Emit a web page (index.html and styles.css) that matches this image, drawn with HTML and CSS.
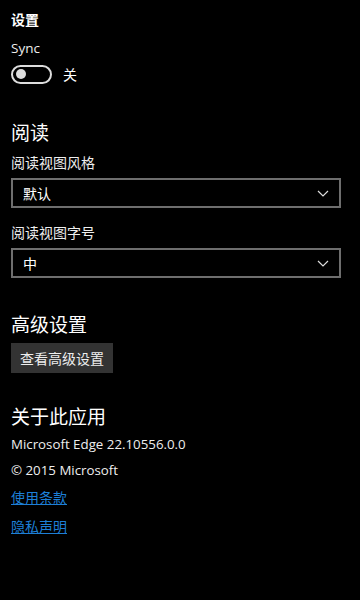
FILE: index.html
```
<!DOCTYPE html>
<html lang="zh-CN">
<head>
    <meta charset="UTF-8">
    <meta name="viewport" content="width=device-width, initial-scale=1.0">
    <title>设置</title>
    <link rel="stylesheet" href="styles.css">
</head>
<body>

    <div class="settings">
        <!-- 设置 / Sync -->
        <section class="group">
            <h3 class="group-title">设置</h3>
            <p class="label">Sync</p>
            <div class="toggle-row">
                <span class="toggle"><span class="knob"></span></span>
                <span class="toggle-text">关</span>
            </div>
        </section>

        <!-- 阅读 -->
        <section class="group reading">
            <h2 class="heading">阅读</h2>
            <p class="label">阅读视图风格</p>
            <div class="select">
                <span>默认</span>
                <svg class="chevron" width="12" height="7" viewBox="0 0 12 7">
                    <polyline points="1,1 6,6 11,1" fill="none" stroke="#ddd" stroke-width="1.2"/>
                </svg>
            </div>
            <p class="label">阅读视图字号</p>
            <div class="select">
                <span>中</span>
                <svg class="chevron" width="12" height="7" viewBox="0 0 12 7">
                    <polyline points="1,1 6,6 11,1" fill="none" stroke="#ddd" stroke-width="1.2"/>
                </svg>
            </div>
        </section>

        <!-- 高级设置 -->
        <section class="group advanced">
            <h2 class="heading">高级设置</h2>
            <button class="btn">查看高级设置</button>
        </section>

        <!-- 关于 -->
        <section class="group about">
            <h2 class="heading">关于此应用</h2>
            <p class="line">Microsoft Edge 22.10556.0.0</p>
            <p class="line">© 2015 Microsoft</p>
            <a href="#" class="link">使用条款</a>
            <a href="#" class="link">隐私声明</a>
        </section>
    </div>

</body>
</html>
```

FILE: styles.css
```
body, html {
    margin: 0;
    padding: 0;
    height: 100%;
    overflow: hidden;
    background-color: black;
}

body {
    color: white;
    font-family: "Open Sans", "Noto Sans CJK SC", sans-serif;
    font-size: 14px;
}

.settings {
    padding: 10px 19px 0 11px;
    display: flex;
    flex-direction: column;
}

.group {
    display: flex;
    flex-direction: column;
}

.group-title {
    margin: 0;
    font-size: 14px;
    font-weight: bold;
    line-height: 20px;
}

.label {
    margin: 0;
    line-height: 20px;
    color: #eee;
}

.group-title + .label {
    margin-top: 8px;
    font-size: 13.5px;
}

.toggle-row {
    display: flex;
    align-items: center;
    gap: 11px;
    margin-top: 6px;
}

.toggle {
    box-sizing: border-box;
    width: 41px;
    height: 19px;
    border: 2px solid #ddd;
    border-radius: 10px;
    display: flex;
    align-items: center;
    padding-left: 3px;
}

.knob {
    width: 10px;
    height: 10px;
    border-radius: 50%;
    background: #ddd;
}

.toggle-text {
    font-size: 14px;
}

.heading {
    margin: 0;
    font-size: 19px;
    font-weight: normal;
    line-height: 26px;
}

.reading {
    margin-top: 36px;
}

.reading .heading + .label {
    margin-top: 7px;
}

.select {
    margin-top: 5px;
    margin-bottom: 15px;
    height: 26px;
    border: 2px solid #6e6e6e;
    display: flex;
    align-items: center;
    justify-content: space-between;
    padding: 0 10px;
}

.advanced {
    margin-top: 19px;
}

.btn {
    margin-top: 5px;
    align-self: flex-start;
    background: #333;
    color: #eee;
    border: none;
    height: 30px;
    padding: 0 9px;
    font-family: inherit;
    font-size: 14px;
}

.about {
    margin-top: 31px;
}

.line {
    margin: 0;
    line-height: 26px;
    color: #eee;
    font-size: 13.3px;
}

.about .heading + .line {
    margin-top: 1px;
}

.link {
    color: #1d7fd6;
    line-height: 29px;
    align-self: flex-start;
}
```
